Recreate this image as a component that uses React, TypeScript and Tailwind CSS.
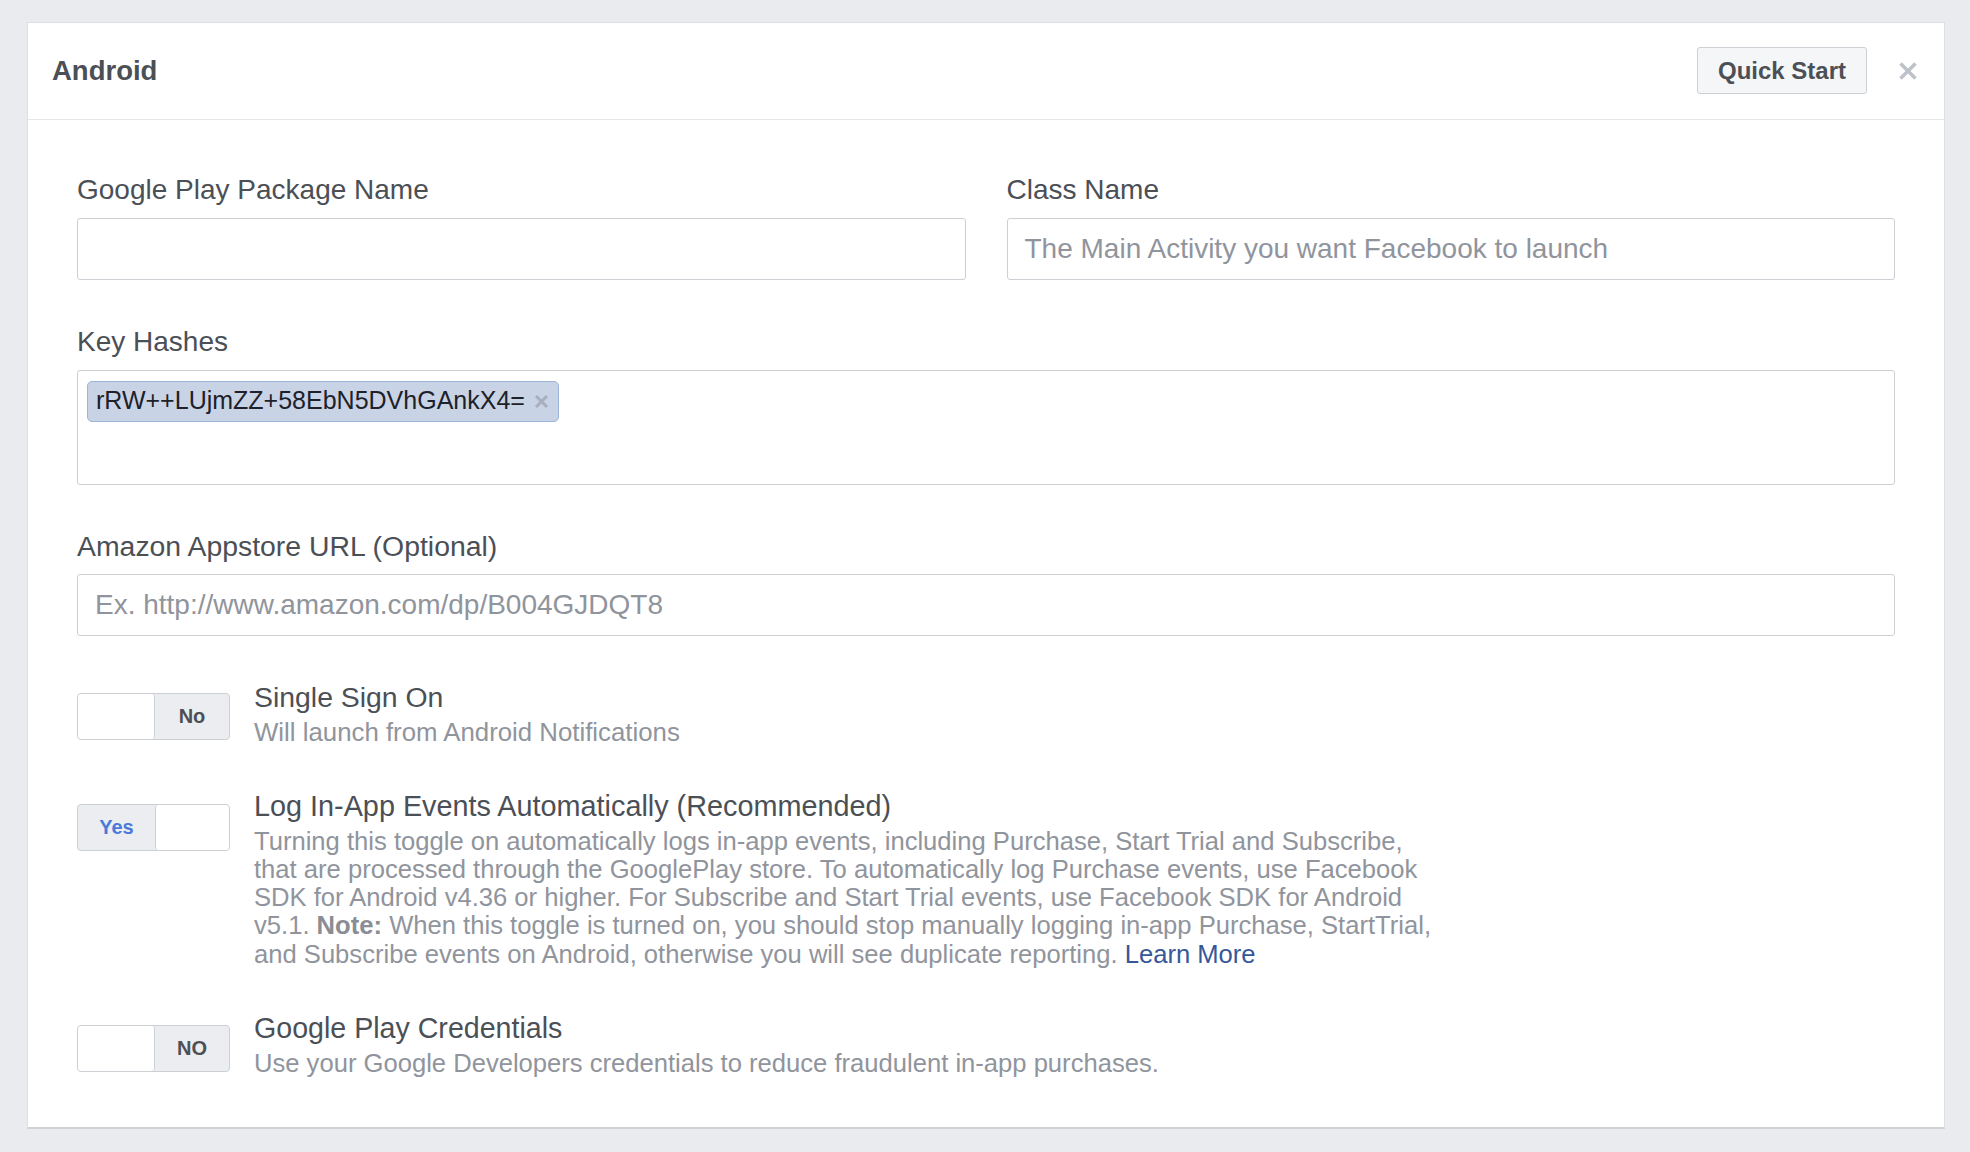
import React from "react";

const font = { fontFamily: '"Liberation Sans", Arial, sans-serif' };

function Toggle({ on, label }: { on: boolean; label: string }) {
  return (
    <div className="flex h-[47px] w-[153px] shrink-0 overflow-hidden rounded-[4px] border-[1.5px] border-[#ccd0d5] bg-[#ebedf0]">
      {on ? (
        <>
          <div className="flex w-[77px] items-center justify-center text-[20px] font-bold text-[#4a7ad9]">{label}</div>
          <div className="flex-1 rounded-[3px] border-l-[1.5px] border-[#ccd0d5] bg-white" />
        </>
      ) : (
        <>
          <div className="w-[77px] rounded-[3px] border-r-[1.5px] border-[#ccd0d5] bg-white" />
          <div className="flex flex-1 items-center justify-center text-[20px] font-bold text-[#4b4f56]">{label}</div>
        </>
      )}
    </div>
  );
}

export default function App() {
  return (
    <div className="min-h-[1152px] bg-[#e9ebee] pl-[27px] pt-[22px]" style={font}>
      <div className="w-[1918px] border border-[#dddfe2] border-b-[#d0d1d5] border-b-2 bg-white">
        {/* Header */}
        <div className="flex h-[96.5px] items-center border-b-[1.5px] border-[#e5e6e9] pl-[24px] pr-[26px]">
          <div className="flex-1 text-[27.5px] font-bold text-[#4b4f56]">Android</div>
          <button className="flex h-[47px] w-[170px] items-center justify-center rounded-[3px] border-[1.5px] border-[#ccd0d5] bg-[#f5f6f7] text-[24px] font-bold text-[#4b4f56]">
            Quick Start
          </button>
          <div className="ml-[31px] flex h-[20px] w-[20px] items-center justify-center">
            <svg width="20" height="20" viewBox="0 0 20 20">
              <path d="M2.5 2.5 L17.5 17.5 M17.5 2.5 L2.5 17.5" stroke="#bec2c9" strokeWidth="3.6" strokeLinecap="butt" />
            </svg>
          </div>
        </div>

        {/* Body */}
        <div className="flex flex-col px-[49px] pb-[50.5px] pt-[53px]">
          <div className="grid grid-cols-2 gap-x-[41px]">
            <div>
              <div className="mb-[11px] text-[28px] leading-[34px] text-[#4b4f56]">Google Play Package Name</div>
              <div className="h-[62px] rounded-[3px] border-[1.5px] border-[#ccd0d5] bg-white" />
            </div>
            <div>
              <div className="mb-[11px] text-[28px] leading-[34px] text-[#4b4f56]">Class Name</div>
              <div className="flex h-[62px] items-center rounded-[3px] border-[1.5px] border-[#ccd0d5] bg-white px-[17px] text-[28px] text-[#90949c]">
                The Main Activity you want Facebook to launch
              </div>
            </div>
          </div>

          <div className="mt-[45px]">
            <div className="mb-[11px] text-[28px] leading-[34px] text-[#4b4f56]">Key Hashes</div>
            <div className="h-[115px] rounded-[3px] border-[1.5px] border-[#ccd0d5] bg-white pl-[9px] pt-[10px]">
              <div className="inline-flex h-[41px] items-center rounded-[5px] border-[1.5px] border-[#9cb4d8] bg-[#c9d3e6] pl-[8px] pr-[9px] text-[25px] text-[#1d2129]">
                <span>rRW++LUjmZZ+58EbN5DVhGAnkX4=</span>
                <svg className="ml-[9px]" width="15" height="15" viewBox="0 0 15 15">
                  <path d="M2 2 L13 13 M13 2 L2 13" stroke="#a8b0bd" strokeWidth="3" />
                </svg>
              </div>
            </div>
          </div>

          <div className="mt-[44px]">
            <div className="mb-[11px] text-[28.4px] leading-[34px] text-[#4b4f56]">Amazon Appstore URL (Optional)</div>
            <div className="flex h-[62px] items-center rounded-[3px] border-[1.5px] border-[#ccd0d5] bg-white px-[17px] text-[28px] text-[#90949c]">
              Ex. http://www.amazon.com/dp/B004GJDQT8
            </div>
          </div>

          {/* Toggle rows */}
          <div className="mt-[45px] flex items-start">
            <div className="mt-[12px]">
              <Toggle on={false} label="No" />
            </div>
            <div className="ml-[24px]">
              <div className="text-[28.4px] leading-[32px] text-[#4b4f56]">Single Sign On</div>
              <div className="mt-[5px] text-[25.8px] leading-[28px] text-[#90949c]">Will launch from Android Notifications</div>
            </div>
          </div>

          <div className="mt-[44px] flex items-start">
            <div className="mt-[14px]">
              <Toggle on={true} label="Yes" />
            </div>
            <div className="ml-[24px]">
              <div className="text-[28.8px] leading-[32px] text-[#4b4f56]">Log In-App Events Automatically (Recommended)</div>
              <div className="mt-[5px] whitespace-nowrap text-[25.6px] leading-[28.3px] text-[#90949c]">
                Turning this toggle on automatically logs in-app events, including Purchase, Start Trial and Subscribe,
                <br />
                that are processed through the GooglePlay store. To automatically log Purchase events, use Facebook
                <br />
                SDK for Android v4.36 or higher. For Subscribe and Start Trial events, use Facebook SDK for Android
                <br />
                v5.1. <span className="font-bold text-[#8a8d94]">Note:</span> When this toggle is turned on, you should stop manually logging in-app Purchase, StartTrial,
                <br />
                and Subscribe events on Android, otherwise you will see duplicate reporting.{" "}
                <span className="text-[#365899]">Learn More</span>
              </div>
            </div>
          </div>

          <div className="mt-[44px] flex items-start">
            <div className="mt-[13px]">
              <Toggle on={false} label="NO" />
            </div>
            <div className="ml-[24px]">
              <div className="text-[28.6px] leading-[32px] text-[#4b4f56]">Google Play Credentials</div>
              <div className="mt-[5px] text-[25.6px] leading-[28px] text-[#90949c]">
                Use your Google Developers credentials to reduce fraudulent in-app purchases.
              </div>
            </div>
          </div>
        </div>
      </div>
    </div>
  );
}
